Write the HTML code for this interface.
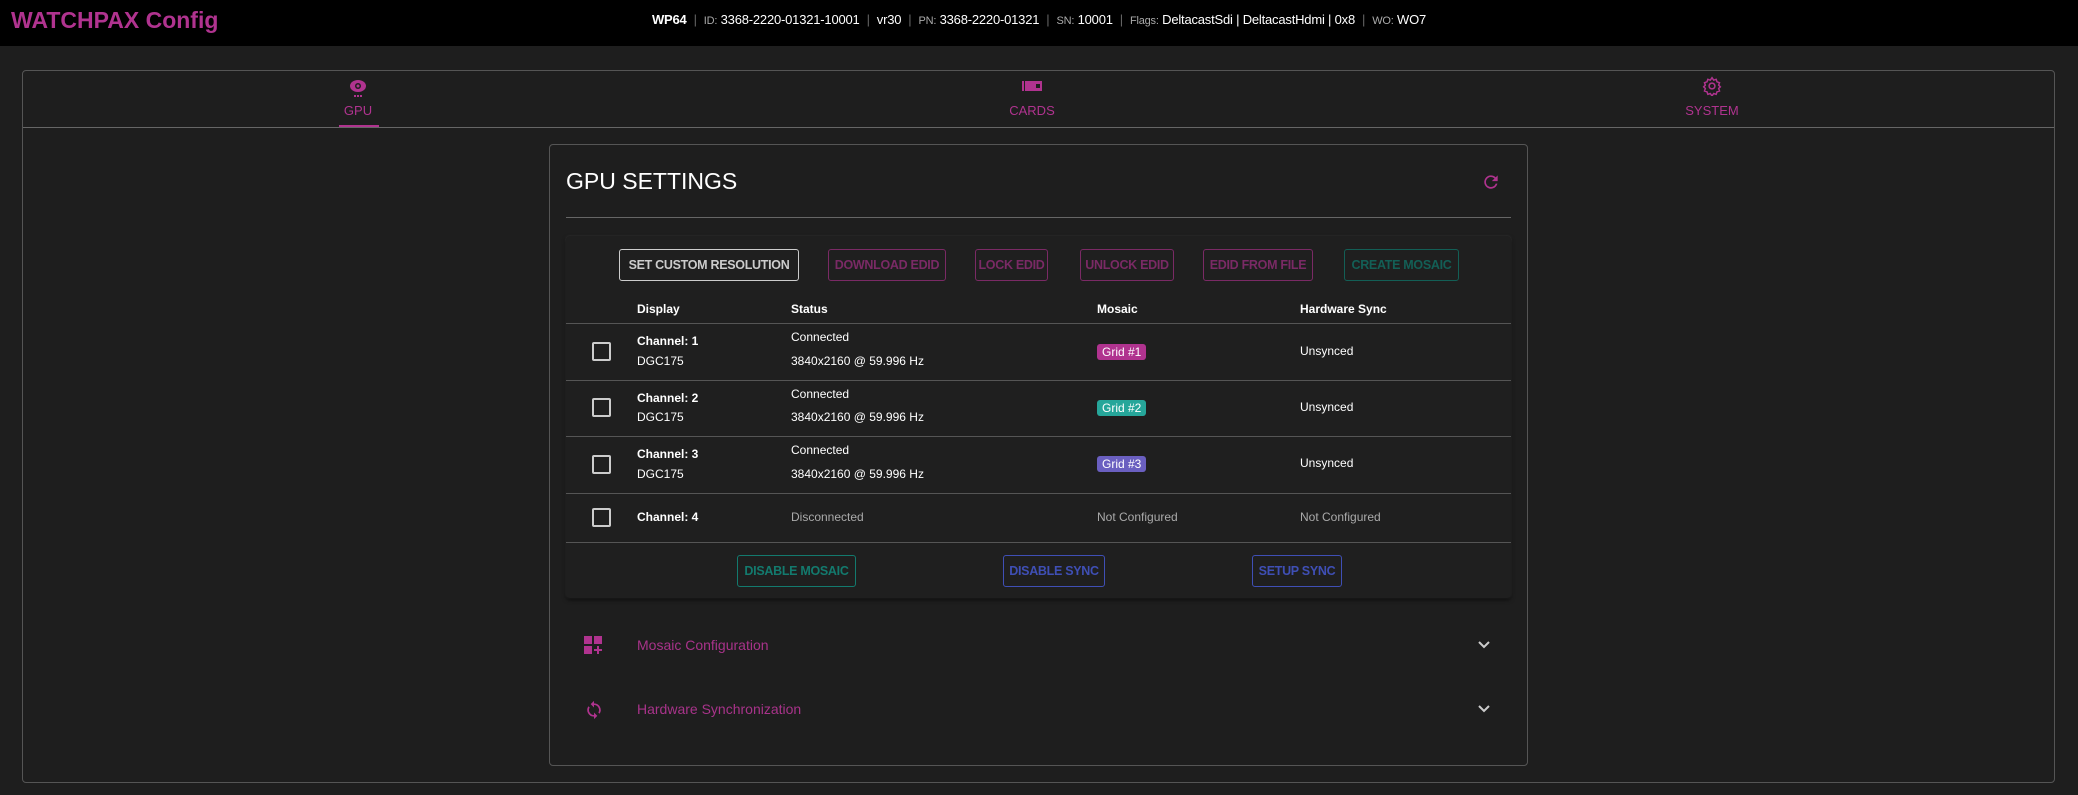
<!DOCTYPE html>
<html><head><meta charset="utf-8"><style>
*{box-sizing:border-box;margin:0;padding:0}
body{width:2078px;height:795px;background:#1e1e1e;font-family:"Liberation Sans",sans-serif;color:#fff;position:relative;overflow:hidden}
.abs{position:absolute}
.hdr{left:0;top:0;width:2078px;height:46px;background:#000}
.title{left:11px;top:7px;font-size:23px;font-weight:bold;color:#b0338f}
.info{left:0;width:2078px;top:12px;text-align:center;font-size:13px;color:#fff;white-space:nowrap;letter-spacing:-0.2px}
.info .l{color:#aaa;font-size:11px}.info .s{color:#666;margin:0 7px}
.outer{left:22px;top:70px;width:2033px;height:713px;border:1px solid #555;border-radius:4px}
.tabline{left:23px;top:127px;width:2031px;height:1px;background:#666}
.tab{font-size:13px;color:#b0338f;text-align:center;width:200px}
.card{left:549px;top:144px;width:979px;height:622px;border:1px solid #555;border-radius:4px;background:#1e1e1e}
.tcard{left:566px;top:236px;width:945px;height:362px;background:#1f1f1f;border-radius:4px;box-shadow:0 2px 4px rgba(0,0,0,.6),0 0 2px rgba(255,255,255,.15)}
.btn{height:32px;border:1px solid;border-radius:3px;font-size:12.5px;font-weight:bold;line-height:30px;text-align:center;white-space:nowrap;letter-spacing:-0.3px}
.hl{height:1px;background:#555;left:566px;width:945px}
.t{font-size:12px;color:#fff;white-space:nowrap}
.cb{width:19px;height:19px;border:2px solid #ccc;border-radius:2px;left:592px}
.grid{font-size:12px;padding:1px 5px;border-radius:3px;color:#fff}
.g{color:#aaa}
</style></head><body>
<div class="abs hdr"></div>
<div class="abs title">WATCHPAX Config</div>
<div class="abs info"><b>WP64</b><span class="s">|</span><span class="l">ID:</span> 3368-2220-01321-10001<span class="s">|</span>vr30<span class="s">|</span><span class="l">PN:</span> 3368-2220-01321<span class="s">|</span><span class="l">SN:</span> 10001<span class="s">|</span><span class="l">Flags:</span> DeltacastSdi | DeltacastHdmi | 0x8<span class="s">|</span><span class="l">WO:</span> WO7</div>
<div class="abs outer"></div>
<div class="abs tabline"></div>
<svg class="abs" style="left:348px;top:78px" width="20" height="20" viewBox="0 0 20 20"><ellipse cx="10" cy="8" rx="8" ry="6" fill="#b0338f"/><circle cx="10" cy="8" r="3" fill="#1e1e1e"/><circle cx="10" cy="8" r="1.5" fill="#b0338f"/><rect x="6" y="17" width="2" height="2" fill="#b0338f"/><rect x="9" y="17" width="2" height="2" fill="#b0338f"/><rect x="12" y="17" width="2" height="2" fill="#b0338f"/></svg>
<div class="abs tab" style="left:258px;top:103px">GPU</div>
<div class="abs" style="left:339px;top:125px;width:40px;height:2px;background:#b0338f"></div>
<svg class="abs" style="left:1022px;top:80px" width="20" height="12" viewBox="0 0 20 12"><rect x="0" y="1" width="2" height="10" fill="#b0338f"/><rect x="3" y="1" width="17" height="10" fill="#b0338f"/><rect x="14" y="4" width="4" height="4" fill="#1e1e1e"/></svg>
<div class="abs tab" style="left:932px;top:103px">CARDS</div>
<svg class="abs" style="left:1702px;top:76px" width="20" height="20" viewBox="0 0 24 24"><path d="M12 2l2 3 3-1 1 3 3 1-1 3 2 2-2 2 1 3-3 1-1 3-3-1-2 3-2-3-3 1-1-3-3-1 1-3-2-2 2-2-1-3 3-1 1-3 3 1z" fill="none" stroke="#b0338f" stroke-width="1.8"/><circle cx="12" cy="12" r="3.5" fill="none" stroke="#b0338f" stroke-width="1.8"/></svg>
<div class="abs tab" style="left:1612px;top:103px">SYSTEM</div>

<div class="abs card"></div>
<div class="abs" style="left:566px;top:168px;font-size:23px">GPU SETTINGS</div>
<svg class="abs" style="left:1481px;top:172px" width="20" height="20" viewBox="0 0 24 24"><path d="M17.6 6.4A8 8 0 1 0 19.7 14h-2.1A6 6 0 1 1 16.2 7.8L13 11h7V4z" fill="#b0338f"/></svg>
<div class="abs" style="left:566px;top:217px;width:945px;height:1px;background:#666"></div>
<div class="abs tcard"></div>
<div class="abs btn" style="left:619px;top:249px;width:180px;border-color:#ccc;color:#ccc">SET CUSTOM RESOLUTION</div>
<div class="abs btn" style="left:828px;top:249px;width:118px;border-color:#7a2a65;color:#7a2a65">DOWNLOAD EDID</div>
<div class="abs btn" style="left:975px;top:249px;width:73px;border-color:#7a2a65;color:#7a2a65">LOCK EDID</div>
<div class="abs btn" style="left:1080px;top:249px;width:94px;border-color:#7a2a65;color:#7a2a65">UNLOCK EDID</div>
<div class="abs btn" style="left:1203px;top:249px;width:110px;border-color:#7a2a65;color:#7a2a65">EDID FROM FILE</div>
<div class="abs btn" style="left:1344px;top:249px;width:115px;border-color:#135f56;color:#135f56">CREATE MOSAIC</div>

<div class="abs t" style="left:637px;top:302px;font-weight:bold">Display</div>
<div class="abs t" style="left:791px;top:302px;font-weight:bold">Status</div>
<div class="abs t" style="left:1097px;top:302px;font-weight:bold">Mosaic</div>
<div class="abs t" style="left:1300px;top:302px;font-weight:bold">Hardware Sync</div>
<div class="abs hl" style="top:323px"></div>
<div class="abs hl" style="top:380px"></div>
<div class="abs hl" style="top:436px"></div>
<div class="abs hl" style="top:493px"></div>
<div class="abs hl" style="top:542px"></div>

<div class="abs cb" style="top:342px"></div>
<div class="abs t" style="left:637px;top:334px;font-weight:bold">Channel: 1</div>
<div class="abs t" style="left:637px;top:354px">DGC175</div>
<div class="abs t" style="left:791px;top:330px">Connected</div>
<div class="abs t" style="left:791px;top:354px">3840x2160 @ 59.996 Hz</div>
<div class="abs grid" style="left:1097px;top:344px;background:#b0338f">Grid #1</div>
<div class="abs t" style="left:1300px;top:344px">Unsynced</div>

<div class="abs cb" style="top:398px"></div>
<div class="abs t" style="left:637px;top:391px;font-weight:bold">Channel: 2</div>
<div class="abs t" style="left:637px;top:410px">DGC175</div>
<div class="abs t" style="left:791px;top:387px">Connected</div>
<div class="abs t" style="left:791px;top:410px">3840x2160 @ 59.996 Hz</div>
<div class="abs grid" style="left:1097px;top:400px;background:#26a69a">Grid #2</div>
<div class="abs t" style="left:1300px;top:400px">Unsynced</div>

<div class="abs cb" style="top:455px"></div>
<div class="abs t" style="left:637px;top:447px;font-weight:bold">Channel: 3</div>
<div class="abs t" style="left:637px;top:467px">DGC175</div>
<div class="abs t" style="left:791px;top:443px">Connected</div>
<div class="abs t" style="left:791px;top:467px">3840x2160 @ 59.996 Hz</div>
<div class="abs grid" style="left:1097px;top:456px;background:#6a5fc0">Grid #3</div>
<div class="abs t" style="left:1300px;top:456px">Unsynced</div>

<div class="abs cb" style="top:508px"></div>
<div class="abs t" style="left:637px;top:510px;font-weight:bold">Channel: 4</div>
<div class="abs t g" style="left:791px;top:510px">Disconnected</div>
<div class="abs t g" style="left:1097px;top:510px">Not Configured</div>
<div class="abs t g" style="left:1300px;top:510px">Not Configured</div>

<div class="abs btn" style="left:737px;top:555px;width:119px;border-color:#137a6e;color:#137a6e">DISABLE MOSAIC</div>
<div class="abs btn" style="left:1003px;top:555px;width:102px;border-color:#3f4fb5;color:#3f4fb5">DISABLE SYNC</div>
<div class="abs btn" style="left:1252px;top:555px;width:90px;border-color:#3f4fb5;color:#3f4fb5">SETUP SYNC</div>

<svg class="abs" style="left:584px;top:636px" width="20" height="20" viewBox="0 0 20 20"><rect x="0" y="0" width="8" height="8" fill="#b0338f"/><rect x="10" y="0" width="8" height="8" fill="#b0338f"/><rect x="0" y="10" width="8" height="8" fill="#b0338f"/><path d="M14 10v8M10 14h8" stroke="#b0338f" stroke-width="2"/></svg>
<div class="abs" style="left:637px;top:637px;font-size:14px;color:#a8338a">Mosaic Configuration</div>
<svg class="abs" style="left:1477px;top:640px" width="14" height="10" viewBox="0 0 14 10"><path d="M2 2l5 5 5-5" fill="none" stroke="#ccc" stroke-width="2"/></svg>
<svg class="abs" style="left:584px;top:699px" width="20" height="22" viewBox="0 0 24 24"><path d="M12 4V1L8 5l4 4V6a6 6 0 0 1 5.2 9l1.5 1.5A8 8 0 0 0 12 4zm0 14a6 6 0 0 1-5.2-9L5.3 7.5A8 8 0 0 0 12 20v3l4-4-4-4z" fill="#b0338f"/></svg>
<div class="abs" style="left:637px;top:701px;font-size:14px;color:#a8338a">Hardware Synchronization</div>
<svg class="abs" style="left:1477px;top:704px" width="14" height="10" viewBox="0 0 14 10"><path d="M2 2l5 5 5-5" fill="none" stroke="#ccc" stroke-width="2"/></svg>
</body></html>
